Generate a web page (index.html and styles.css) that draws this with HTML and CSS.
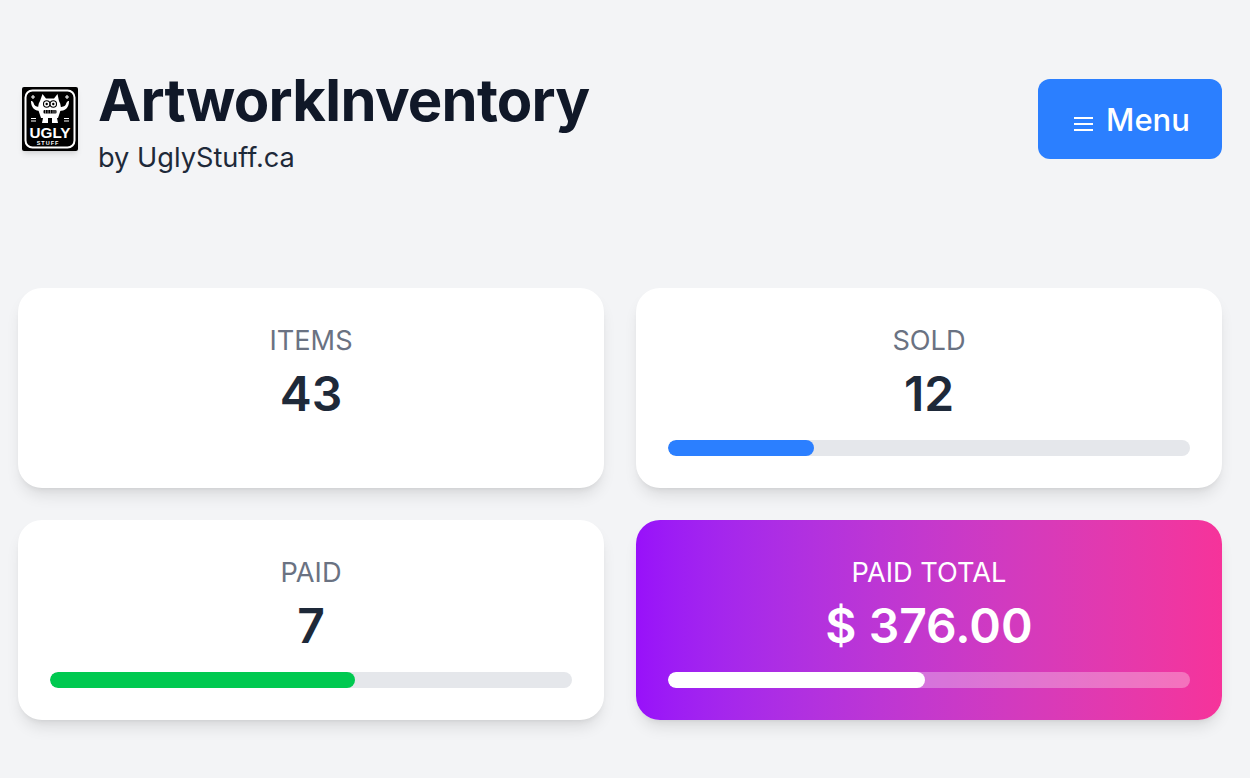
FILE: index.html
```html
<!DOCTYPE html>
<html lang="en">
<head>
<meta charset="utf-8">
<title>ArtworkInventory</title>
<link rel="stylesheet" href="styles.css">
</head>
<body>
<header class="header">
  <div class="brand">
    <svg class="logo" viewBox="0 0 56 64" aria-label="Ugly Stuff logo">
      <rect width="56" height="64" rx="2" fill="#000"/>
      <rect x="3.500" y="3.500" width="49" height="57" rx="7" fill="none" stroke="#fff" stroke-width="2"/>
      <g stroke="#fff" stroke-width="1.100" fill="none">
        <path d="M11 8v4M9 10h4M45 8v4M43 10h4"/>
        <path d="M9 31.500h5M9 34h5M42 31.500h5M42 34h5"/>
      </g>
      <path d="M20.500 7l3.500 4.500h8L35.500 7l1.500 7c2 3 2.500 8 1 11l-2 6h-17l-2-6c-1.500-3-1-8 1-11z" fill="#fff"/>
      <path d="M19 24c-6 0-10-3-10-10 2.500 0 2.500 2.500 3.500 4s3 2 6.500 2zM37 24c6 0 10-3 10-10-2.500 0-2.500 2.500-3.500 4s-3 2-6.500 2z" fill="#fff"/>
      <path d="M21 31h5v5h-6zM30 31h5l1 5h-6z" fill="#fff"/>
      <circle cx="24.700" cy="17" r="3.200" fill="#fff" stroke="#000" stroke-width="1.100"/>
      <circle cx="31.300" cy="17" r="3.200" fill="#fff" stroke="#000" stroke-width="1.100"/>
      <circle cx="24.700" cy="17" r="1.200" fill="#000"/>
      <circle cx="31.300" cy="17" r="1.200" fill="#000"/>
      <rect x="21.500" y="23" width="13" height="3.600" rx="1" fill="#000"/>
      <path d="M23.500 23v3.600M26 23v3.600M28.500 23v3.600M31 23v3.600M33 23v3.600" stroke="#fff" stroke-width=".5"/>
      <text class="logo-ugly" x="28" y="51" text-anchor="middle" textLength="41" lengthAdjust="spacingAndGlyphs">UGLY</text>
      <text class="logo-stuff" x="26" y="58" text-anchor="middle">STUFF</text>
    </svg>
    <div class="brand-text">
      <h1 class="title">ArtworkInventory</h1>
      <p class="subtitle">by UglyStuff.ca</p>
    </div>
  </div>
  <button class="menu-button" type="button">
    <svg class="menu-icon" viewBox="0 0 19 16" aria-hidden="true">
      <path d="M0 2h19M0 8h19M0 14h19"/>
    </svg>
    <span>Menu</span>
  </button>
</header>
<main class="grid">
  <section class="card">
    <div class="label">ITEMS</div>
    <div class="value">43</div>
  </section>
  <section class="card">
    <div class="label">SOLD</div>
    <div class="value">12</div>
    <div class="track"><div class="fill fill-blue" style="width:28%"></div></div>
  </section>
  <section class="card">
    <div class="label">PAID</div>
    <div class="value">7</div>
    <div class="track"><div class="fill fill-green" style="width:58.400%"></div></div>
  </section>
  <section class="card card-accent">
    <div class="label">PAID TOTAL</div>
    <div class="value">$ 376.00</div>
    <div class="track"><div class="fill fill-white" style="width:49.200%"></div></div>
  </section>
</main>
</body>
</html>
```
FILE: styles.css
```css
* { box-sizing: border-box; }
html, body { margin: 0; height: 100%; }
body {
  background: #f3f4f6;
  font-family: Inter, "Liberation Sans", sans-serif;
  padding: 0 28px 0 18px;
  overflow: hidden;
}
.header {
  display: flex;
  justify-content: space-between;
  align-items: center;
  height: 288px;
  padding-bottom: 50px;
}
.brand { display: flex; align-items: center; gap: 20px; padding-left: 4px; }
.logo {
  display: block;
  width: 56px;
  height: 64px;
  box-shadow: 0 4px 6px -1px rgba(0,0,0,.1), 0 2px 4px -2px rgba(0,0,0,.1);
}
.logo-ugly { font: 700 15.500px "Liberation Sans", sans-serif; fill: #fff; }
.logo-stuff { font: 700 5.500px "Liberation Sans", sans-serif; fill: #fff; letter-spacing: 1px; }
.brand-text { padding-top: 6px; }
.title {
  margin: 0;
  font-size: 58px;
  font-weight: 700;
  letter-spacing: -.8px;
  line-height: 60px;
  color: #101828;
}
.subtitle {
  margin: 12px 0 0;
  font-size: 27.200px;
  line-height: 32px;
  color: #1e2939;
}
.menu-button {
  display: flex;
  align-items: center;
  justify-content: center;
  gap: 13px;
  width: 184px;
  height: 80px;
  padding: 2px 0 0 4px;
  border: 0;
  border-radius: 12px;
  background: #2b7fff;
  color: #fff;
  font: 500 31px/36px Inter, sans-serif;
}
.menu-icon {
  width: 19px;
  height: 16px;
  margin-top: 7px;
  fill: none;
  stroke: #fff;
  stroke-width: 2;
}
.grid {
  display: grid;
  grid-template-columns: 1fr 1fr;
  grid-auto-rows: 200px;
  gap: 32px;
}
.card {
  background: #fff;
  border-radius: 24px;
  padding: 32px;
  text-align: center;
  box-shadow: 0 10px 15px -3px rgba(0,0,0,.1), 0 4px 6px -4px rgba(0,0,0,.1);
}
.card-accent {
  background: linear-gradient(to right in oklab, #9810fa, #f6339a);
  color: #fff;
}
.label {
  font-size: 27.200px;
  line-height: 42px;
  color: #6a7282;
}
.value {
  font-size: 48px;
  line-height: 60px;
  font-weight: 600;
  color: #1e2939;
  margin-top: 2px;
}
.card-accent .label, .card-accent .value { color: #fff; }
.track {
  height: 16px;
  margin-top: 16px;
  border-radius: 8px;
  background: #e5e7eb;
  overflow: hidden;
}
.card-accent .track { background: rgba(255,255,255,.3); }
.fill { height: 100%; border-radius: 8px; }
.fill-blue { background: #2b7fff; }
.fill-green { background: #00c950; }
.fill-white { background: #fff; }
```
